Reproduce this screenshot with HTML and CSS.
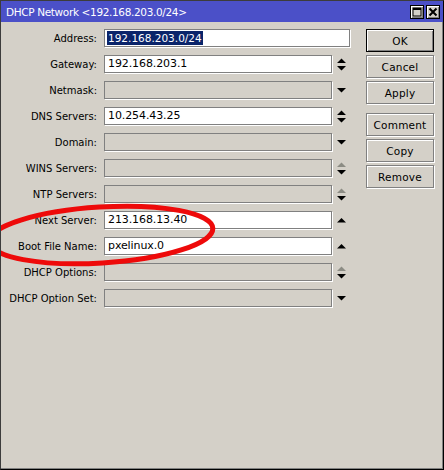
FILE: index.html
```html
<!DOCTYPE html>
<html>
<head>
<meta charset="utf-8">
<link rel="stylesheet" href="styles.css">
</head>
<body>
<div class="window">
  <div class="titlebar">
    <span class="title">DHCP Network &lt;192.168.203.0/24&gt;</span>
    <div class="tbtns">
      <span class="tbtn"><svg width="10" height="10" viewBox="0 0 10 10"><rect x="1" y="1" width="8" height="8" fill="none" stroke="#000" stroke-width="1"/><rect x="1" y="1" width="8" height="2" fill="#000"/></svg></span>
      <span class="tbtn"><svg width="10" height="10" viewBox="0 0 10 10"><path d="M1.5 1.5 L8.5 8.5 M8.5 1.5 L1.5 8.5" stroke="#000" stroke-width="2"/></svg></span>
    </div>
  </div>
  <div class="content">
    <div class="form">
      <div class="row"><label class="lbl">Address:</label><div class="field wide"><span class="sel">192.168.203.0/24</span></div></div>
      <div class="row"><label class="lbl">Gateway:</label><div class="field">192.168.203.1</div><span class="arr"><svg width="9" height="13" viewBox="0 0 9 13"><path d="M0 5 L4.5 0.5 L9 5Z M0 8 L9 8 L4.5 12.5Z" fill="#000"/></svg></span></div>
      <div class="row"><label class="lbl">Netmask:</label><div class="field off"></div><span class="arr"><svg width="9" height="13" viewBox="0 0 9 13"><path d="M0 4 L9 4 L4.5 8.5Z" fill="#000"/></svg></span></div>
      <div class="row"><label class="lbl">DNS Servers:</label><div class="field">10.254.43.25</div><span class="arr"><svg width="9" height="13" viewBox="0 0 9 13"><path d="M0 5 L4.5 0.5 L9 5Z M0 8 L9 8 L4.5 12.5Z" fill="#000"/></svg></span></div>
      <div class="row"><label class="lbl">Domain:</label><div class="field off"></div><span class="arr"><svg width="9" height="13" viewBox="0 0 9 13"><path d="M0 4 L9 4 L4.5 8.5Z" fill="#000"/></svg></span></div>
      <div class="row"><label class="lbl">WINS Servers:</label><div class="field off"></div><span class="arr"><svg width="9" height="13" viewBox="0 0 9 13"><path d="M0 5 L4.5 0.5 L9 5Z" fill="#8c8c84"/><path d="M0 8 L9 8 L4.5 12.5Z" fill="#000"/></svg></span></div>
      <div class="row"><label class="lbl">NTP Servers:</label><div class="field off"></div><span class="arr"><svg width="9" height="13" viewBox="0 0 9 13"><path d="M0 5 L4.5 0.5 L9 5Z" fill="#8c8c84"/><path d="M0 8 L9 8 L4.5 12.5Z" fill="#000"/></svg></span></div>
      <div class="row"><label class="lbl">Next Server:</label><div class="field">213.168.13.40</div><span class="arr"><svg width="9" height="13" viewBox="0 0 9 13"><path d="M0 8.5 L4.5 4 L9 8.5Z" fill="#000"/></svg></span></div>
      <div class="row"><label class="lbl">Boot File Name:</label><div class="field">pxelinux.0</div><span class="arr"><svg width="9" height="13" viewBox="0 0 9 13"><path d="M0 8.5 L4.5 4 L9 8.5Z" fill="#000"/></svg></span></div>
      <div class="row"><label class="lbl">DHCP Options:</label><div class="field off"></div><span class="arr"><svg width="9" height="13" viewBox="0 0 9 13"><path d="M0 5 L4.5 0.5 L9 5Z" fill="#8c8c84"/><path d="M0 8 L9 8 L4.5 12.5Z" fill="#000"/></svg></span></div>
      <div class="row"><label class="lbl">DHCP Option Set:</label><div class="field off"></div><span class="arr"><svg width="9" height="13" viewBox="0 0 9 13"><path d="M0 4 L9 4 L4.5 8.5Z" fill="#000"/></svg></span></div>
    </div>
    <div class="buttons">
      <div class="btn default">OK</div>
      <div class="btn">Cancel</div>
      <div class="btn">Apply</div>
      <div class="btn sep">Comment</div>
      <div class="btn">Copy</div>
      <div class="btn">Remove</div>
    </div>
  </div>
  <svg class="mark" width="240" height="80" viewBox="0 0 240 80">
    <ellipse cx="112" cy="37" rx="112" ry="28" fill="none" stroke="#ee0a0a" stroke-width="5" transform="rotate(-3.5 112 37)"/>
  </svg>
</div>
</body>
</html>
```
FILE: styles.css
```css
* { box-sizing: border-box; }
html, body { margin: 0; padding: 0; }
body {
  width: 444px;
  height: 470px;
  overflow: hidden;
  font-family: "DejaVu Sans", Verdana, sans-serif;
  font-size: 10px;
  color: #000;
}
.window {
  position: relative;
  width: 444px;
  height: 470px;
  background: #d4d0c8;
  border: 1px solid #3c3c3c;
  border-right-color: #000;
  border-bottom-color: #000;
  box-shadow: inset -1px -1px 0 #808080;
  overflow: hidden;
}
.titlebar {
  height: 21px;
  background: #4b50c8;
  display: flex;
  align-items: center;
  justify-content: space-between;
  padding: 0 3px 0 5px;
}
.title {
  color: #fff;
  font-size: 10.5px;
  letter-spacing: -0.35px;
}
.tbtns { display: flex; gap: 2px; }
.tbtn {
  width: 14px;
  height: 14px;
  background: #d4d0c8;
  border: 1px solid #000;
  box-shadow: inset 1px 1px 0 #fff, inset -1px -1px 0 #808080;
  display: flex;
  align-items: center;
  justify-content: center;
}
.content {
  display: flex;
  padding-top: 7px;
}
.form {
  display: flex;
  flex-direction: column;
  gap: 8px;
}
.row {
  display: flex;
  align-items: center;
  height: 18px;
}
.lbl {
  width: 96px;
  margin-right: 7px;
  text-align: right;
  white-space: nowrap;
  letter-spacing: 0;
}
.field {
  width: 228px;
  height: 18px;
  background: #fff;
  border: 1px solid #808080;
  box-shadow: 1px 1px 0 #fff;
  padding: 0 0 0 3px;
  line-height: 16px;
  font-size: 11px;
  letter-spacing: -0.1px;
  white-space: nowrap;
}
.field.wide { width: 246px; padding-left: 2px; font-size: 10.5px; letter-spacing: 0; }
.field.off { background: #d4d0c8; }
.sel {
  background: #0a246a;
  color: #fff;
  padding: 1px 1px 1px 1px;
}
.arr {
  width: 19px;
  height: 18px;
  display: flex;
  align-items: center;
  justify-content: center;
}
.buttons {
  margin-left: 15px;
  display: flex;
  flex-direction: column;
  gap: 3px;
}
.btn {
  width: 68px;
  height: 23px;
  border: 1px solid #808080;
  box-shadow: 1px 1px 0 #fff, inset 1px 1px 0 #fff;
  display: flex;
  align-items: center;
  justify-content: center;
  font-size: 10.5px;
  letter-spacing: 0.2px;
}
.btn.default {
  border: 1px solid #000;
  box-shadow: inset 1px 1px 0 #fff, inset -1px -1px 0 #808080;
}
.btn.sep { margin-top: 6px; }
.mark {
  position: absolute;
  left: -12px;
  top: 197px;
  pointer-events: none;
}
```
